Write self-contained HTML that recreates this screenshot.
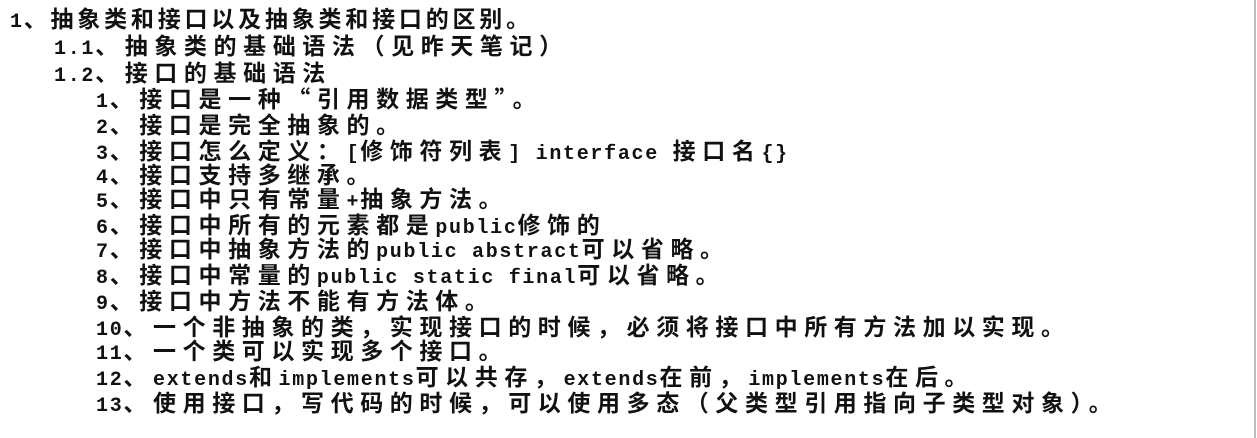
<!DOCTYPE html>
<html><head><meta charset="utf-8"><style>
html,body{margin:0;padding:0;background:#fff;width:1257px;height:438px;overflow:hidden;position:relative}
.l{position:absolute;white-space:nowrap;font-family:"Noto Sans CJK SC","WenQuanYi Zen Hei",sans-serif;font-weight:bold;font-size:23px;letter-spacing:6.6px;line-height:26px;color:#111}
.m{font-family:"Liberation Mono",monospace;font-size:20px;letter-spacing:1.7px;font-weight:bold}
.bar{position:absolute;left:1254px;top:0;width:2px;height:438px;background:#bbb}
</style></head><body>
<div class="l" style="left:10px;top:4px;letter-spacing:3.8px"><span class="m">1</span>、抽象类和接口以及抽象类和接口的区别。</div>
<div class="l" style="left:54px;top:31px"><span class="m">1.1</span>、抽象类的基础语法（见昨天笔记）</div>
<div class="l" style="left:54px;top:58px"><span class="m">1.2</span>、接口的基础语法</div>
<div class="l" style="left:96px;top:84px"><span class="m">1</span>、接口是一种“引用数据类型”。</div>
<div class="l" style="left:96px;top:110px"><span class="m">2</span>、接口是完全抽象的。</div>
<div class="l" style="left:96px;top:136px"><span class="m">3</span>、接口怎么定义：<span class="m">[</span>修饰符列表<span class="m">] interface </span>接口名<span class="m">{}</span></div>
<div class="l" style="left:96px;top:160px"><span class="m">4</span>、接口支持多继承。</div>
<div class="l" style="left:96px;top:184px"><span class="m">5</span>、接口中只有常量<span class="m">+</span>抽象方法。</div>
<div class="l" style="left:96px;top:210px"><span class="m">6</span>、接口中所有的元素都是<span class="m">public</span>修饰的</div>
<div class="l" style="left:96px;top:234px"><span class="m">7</span>、接口中抽象方法的<span class="m">public abstract</span>可以省略。</div>
<div class="l" style="left:96px;top:260px"><span class="m">8</span>、接口中常量的<span class="m">public static final</span>可以省略。</div>
<div class="l" style="left:96px;top:286px"><span class="m">9</span>、接口中方法不能有方法体。</div>
<div class="l" style="left:96px;top:312px"><span class="m">10</span>、一个非抽象的类，实现接口的时候，必须将接口中所有方法加以实现。</div>
<div class="l" style="left:96px;top:336px"><span class="m">11</span>、一个类可以实现多个接口。</div>
<div class="l" style="left:96px;top:362px"><span class="m">12</span>、<span class="m">extends</span>和<span class="m">implements</span>可以共存，<span class="m">extends</span>在前，<span class="m">implements</span>在后。</div>
<div class="l" style="left:96px;top:388px"><span class="m">13</span>、使用接口，写代码的时候，可以使用多态（父类型引用指向子类型对象）。</div>
<div class="bar"></div>
</body></html>
